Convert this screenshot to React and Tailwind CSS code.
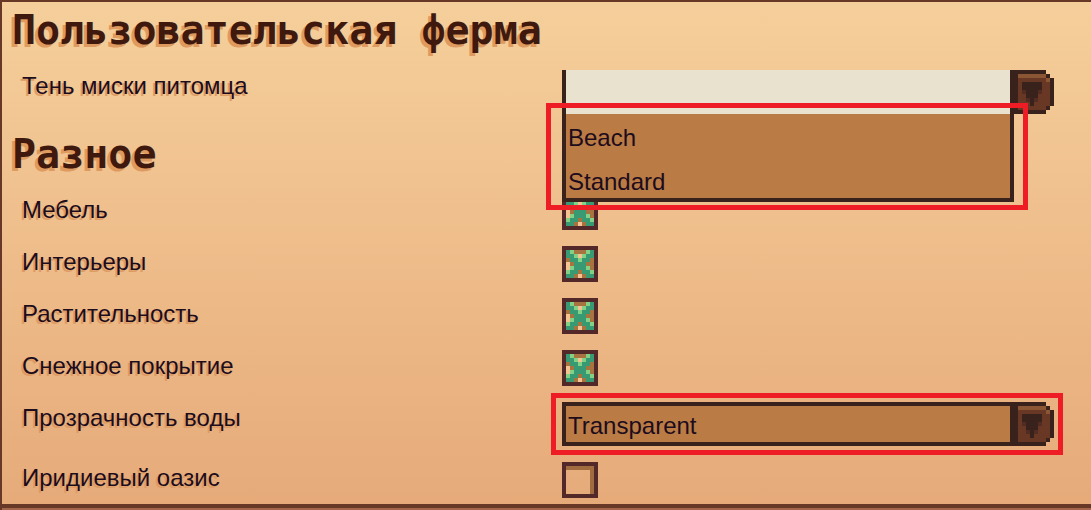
import React from "react";

const PIXELS = { g: "#389a73", l: "#83d185", b: "#a7733f", p: "#f4c391" };

const CHECK = [
  "glbbblg",
  "gglplgg",
  "bgglggb",
  "pbgggbb",
  "plggglb",
  "lggbggl",
  "ggbpbgg",
];

function Check() {
  return (
    <svg viewBox="0 0 7 7" shapeRendering="crispEdges" aria-hidden="true" className="pointer-events-none absolute inset-1 hidden size-7 peer-checked:block">
      {CHECK.flatMap((row, y) =>
        [...row].map((c, x) => <rect key={`${x}-${y}`} x={x} y={y} width="1" height="1" fill={PIXELS[c]} />)
      )}
    </svg>
  );
}

function Arrow() {
  return (
    <svg viewBox="0 0 11 11" shapeRendering="crispEdges" aria-hidden="true" className="pointer-events-none size-11 shrink-0">
      <path d="M0 0h9v1h1v1h1v7h-1v1h-1v1h-9z" fill="#39221c" />
      <path d="M2 1h7v1h1v7h-1v1h-7z" fill="#683824" />
      <path d="M2 1h7v1h1v1h-1v-1h-7z" fill="#8b5633" />
      <path d="M3 5h5v1h-5zM4 7h3v1h-3z" fill="#522c22" />
      <path d="M3 3h5v2h-1v2h-1v2h-1v-2h-1v-2h-1z" fill="#39221c" />
    </svg>
  );
}

function Title({ children }) {
  return (
    <h2 className="h-12 pl-2.5 font-['DejaVu_Sans_Mono',monospace] text-[40px] leading-12 font-bold whitespace-nowrap text-[#3f190d] [text-shadow:-3px_3px_0_#de9a5f]">
      {children}
    </h2>
  );
}

function Row({ id, label, children }) {
  return (
    <div className="grid grid-cols-[540px_minmax(0,492px)] items-start pl-5">
      <label htmlFor={id} className="text-2xl leading-8 whitespace-nowrap [text-shadow:-2px_2px_0_#dd9c64]">
        {label}
      </label>
      {children}
    </div>
  );
}

function CheckRow({ id, label, checked }) {
  return (
    <Row id={id} label={label}>
      <div className="relative size-9">
        <input
          id={id}
          type="checkbox"
          defaultChecked={checked}
          className="peer block size-9 appearance-none border-4 border-[#532828] shadow-[inset_-4px_4px_0_#a06c3f]"
        />
        <Check />
      </div>
    </Row>
  );
}

export default function App() {
  return (
    <main className="flex min-h-screen flex-col border-t-2 border-l-2 border-[#683826] bg-linear-to-b from-[#f5cf9b] to-[#e6aa79] font-['Liberation_Sans',sans-serif] text-[#1d0c1c]">
      <div className="flex grow flex-col gap-4 pt-1 pb-1.5">
        <Title>Пользовательская ферма</Title>
        <Row id="bowl" label="Тень миски питомца">
          <div className="relative z-10 flex">
            <select id="bowl" defaultValue="" className="h-11 min-w-0 grow appearance-none border-l-4 border-[#39221c] bg-[#e9e2ce] text-2xl">
              <option value=""></option>
              <option>Beach</option>
              <option>Standard</option>
            </select>
            <Arrow />
            <ul role="listbox" aria-label="Тень миски питомца" className="absolute top-11 right-10 left-0 h-22 border-x-4 border-b-4 border-[#39221c] bg-[#bb7b45] text-2xl">
              <li role="option" aria-selected="false" className="h-11 pt-2 pl-0.5 leading-8">Beach</li>
              <li role="option" aria-selected="false" className="h-10 pt-2 pl-0.5 leading-8">Standard</li>
            </ul>
            <div className="pointer-events-none absolute top-[33px] right-[26px] -left-4 h-[107px] border-5 border-[#ee1c25]" />
          </div>
        </Row>
        <Title>Разное</Title>
        <CheckRow id="furniture" label="Мебель" checked />
        <CheckRow id="interiors" label="Интерьеры" checked />
        <CheckRow id="plants" label="Растительность" checked />
        <CheckRow id="snow" label="Снежное покрытие" checked />
        <Row id="water" label="Прозрачность воды">
          <div className="relative flex">
            <select id="water" defaultValue="Transparent" className="h-11 min-w-0 grow appearance-none border-4 border-r-0 border-[#39221c] bg-[#bb7b45] pt-1 pl-0.5 text-2xl">
              <option>Transparent</option>
              <option>Opaque</option>
            </select>
            <Arrow />
            <div className="pointer-events-none absolute -inset-y-[9px] -right-[9px] -left-[11px] border-5 border-[#ee1c25]" />
          </div>
        </Row>
        <CheckRow id="oasis" label="Иридиевый оазис" />
      </div>
      <div className="h-1.5 border-t-4 border-[#683826] bg-[#a4664b]" />
    </main>
  );
}
